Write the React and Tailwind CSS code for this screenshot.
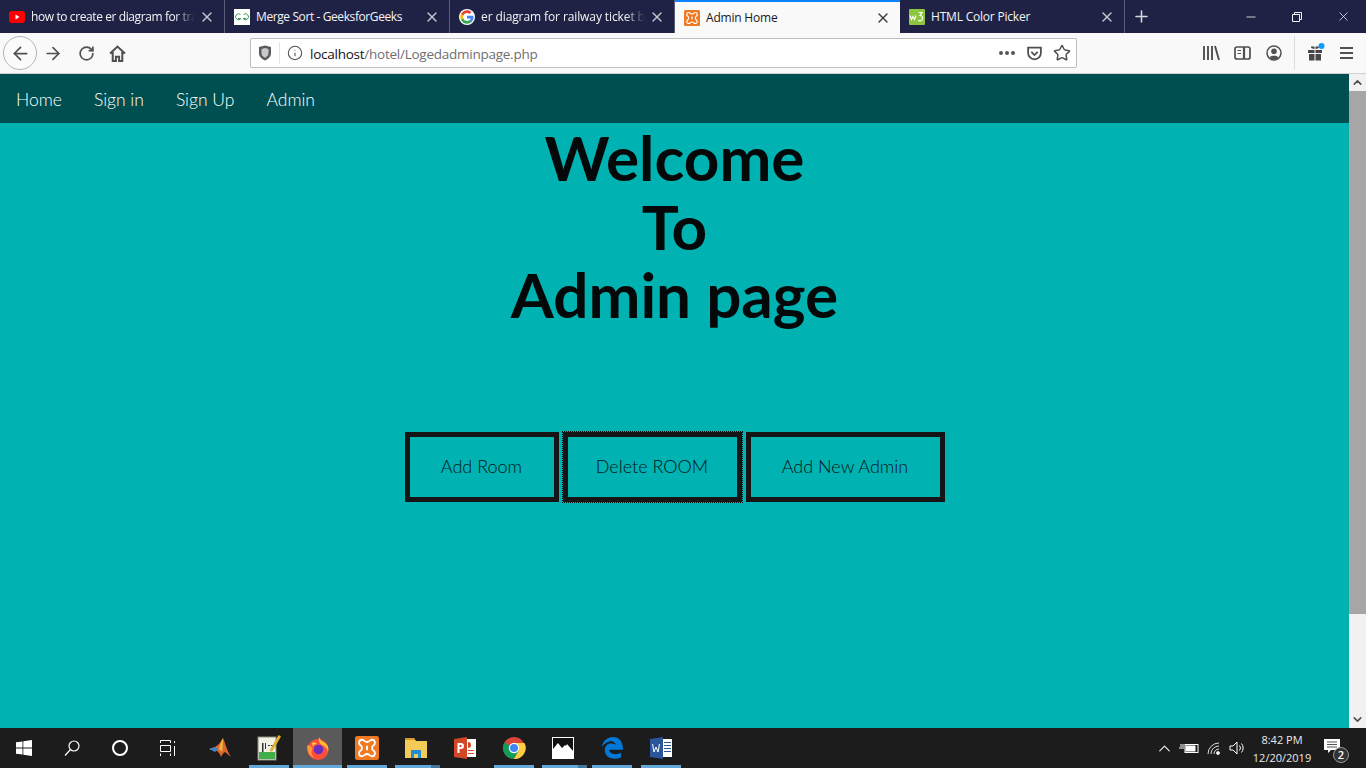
import { ArrowLeft, ArrowRight, RotateCw, Info, Star, X, Plus, Minus, ChevronUp, ChevronDown } from "lucide-react";

const uiFont = "font-['Open_Sans','Liberation_Sans',sans-serif]";
const pageFont = "font-['Lato','Liberation_Sans',sans-serif]";

function YouTube() {
  return (
    <svg width="16" height="16" viewBox="0 0 16 16">
      <rect x="0" y="2" width="16" height="12" rx="3" fill="#f00" />
      <path d="M6.500 5.500v5l4-2.500z" fill="#fff" />
    </svg>
  );
}

function Gfg() {
  return (
    <svg width="16" height="16" viewBox="0 0 16 16">
      <rect width="16" height="16" fill="#fff" />
      <path d="M6.500 5.500A3 3 0 1 0 7 9.500H4M9.500 5.500A3 3 0 1 1 9 9.500h3" stroke="#3f9a57" strokeWidth="1" fill="none" />
    </svg>
  );
}

function Google() {
  return (
    <svg width="16" height="16" viewBox="0 0 48 48">
      <circle cx="24" cy="24" r="24" fill="#fff" />
      <path fill="#EA4335" d="M24 12c3 0 5.600 1 7.700 3l5.700-5.700C33.900 6 29.400 4 24 4 16.200 4 9.500 8.500 6.200 15l6.600 5.100C14.400 15.300 18.800 12 24 12z" />
      <path fill="#4285F4" d="M43.500 24.500c0-1.400-.1-2.700-.4-4H24v7.900h11c-.5 2.500-1.900 4.700-4.100 6.100l6.400 5c3.800-3.500 6.200-8.700 6.200-15z" />
      <path fill="#FBBC05" d="M12.800 28.900c-.5-1.500-.8-3.100-.8-4.900s.3-3.400.8-4.900L6.200 14C4.800 16.900 4 20.300 4 24s.8 7.100 2.200 10z" />
      <path fill="#34A853" d="M24 44c5.400 0 9.900-1.800 13.300-4.900l-6.400-5c-1.800 1.200-4.100 1.900-6.900 1.900-5.200 0-9.600-3.500-11.200-8.100L6.200 33C9.500 39.500 16.200 44 24 44z" />
    </svg>
  );
}

function Xampp({ size = 16 }) {
  return (
    <svg width={size} height={size} viewBox="0 0 16 16">
      <rect width="16" height="16" rx="1.500" fill="#ee7a24" />
      <path d="M4.500 2.500c1.500 0 2 1.500 3.500 1.500s2-1.500 3.500-1.500c2 0 2.500 3 .5 4-.8.400-.8 2.600 0 3 2 1 1.500 4-.5 4-1.500 0-2-1.500-3.500-1.500s-2 1.500-3.500 1.500c-2 0-2.500-3-.5-4 .8-.4.800-2.600 0-3-2-1-1.500-4 .5-4z" fill="none" stroke="#fff" strokeWidth="1.200" />
      <path d="M8 6.500v3" stroke="#fff" strokeWidth="1.200" />
    </svg>
  );
}

function W3() {
  return (
    <svg width="16" height="16" viewBox="0 0 16 16">
      <rect width="16" height="16" rx="1" fill="#8cc63f" />
      <path d="M1 6.500l1.500 4 1.500-3 1.500 3 1.500-4M9.500 3.500H13l-2 3c1.500 0 2.500.8 2.500 2.300S12.500 12 11.200 12c-.8 0-1.400-.3-1.800-.9" fill="none" stroke="#fff" strokeWidth="1.200" />
    </svg>
  );
}

const tabs = [
  { title: "how to create er diagram for tra", icon: <YouTube />, faded: true, track: "tracking-[-0.4px]" },
  { title: "Merge Sort - GeeksforGeeks", icon: <Gfg />, track: "tracking-[-0.4px]" },
  { title: "er diagram for railway ticket bo", icon: <Google />, faded: true, track: "tracking-[-0.1px]" },
  { title: "Admin Home", icon: <Xampp />, active: true, track: "tracking-[-0.2px]" },
  { title: "HTML Color Picker", icon: <W3 />, track: "tracking-[-0.2px]" },
];

function TabStrip() {
  return (
    <div className={`flex h-[33px] bg-[#1f2244] text-xs ${uiFont}`}>
      {tabs.map((tab) => (
        <div
          key={tab.title}
          className={`flex w-[225px] items-center pl-[9px] pr-[9px] ${
            tab.active
              ? "border-t-2 border-[#0a84ff] bg-[#f9f9fa] text-[#18191a]"
              : "border-r border-[#5b5d76] text-[#f4f4f6]"
          }`}
        >
          <span className="w-[22px] shrink-0">{tab.icon}</span>
          <span
            className={`min-w-0 flex-1 overflow-hidden whitespace-nowrap pt-px ${tab.track} ${
              tab.faded ? "[mask-image:linear-gradient(to_right,#000_88%,transparent)]" : ""
            }`}
          >
            {tab.title}
          </span>
          <X size={16} className={tab.active ? "ml-1 text-[#3d3d40]" : "ml-1 text-[#c6c7d0]"} />
        </div>
      ))}
      <div className="flex w-[33px] items-center justify-center text-[#d5d6df]">
        <Plus size={19} />
      </div>
      <div className="flex flex-1 items-center justify-end text-[#f2f2f6]">
        <div className="flex w-[46px] justify-center"><Minus size={14} strokeWidth={1.4} /></div>
        <div className="flex w-[46px] justify-center">
          <svg width="10" height="10" viewBox="0 0 10 10" fill="none" stroke="currentColor">
            <path d="M2.500 2.500V.5h7v7h-2M.5 2.500h7v7h-7z" />
          </svg>
        </div>
        <div className="flex w-[46px] justify-center"><X size={15} strokeWidth={1.2} /></div>
      </div>
    </div>
  );
}

function Toolbar() {
  return (
    <div className={`flex h-[41px] items-center border-b border-[#d0d0d2] bg-[#f9f9fa] text-[#505053] ${uiFont}`}>
      <div className="flex w-[250px] items-center pl-[3px]">
        <div className="flex h-[34px] w-[34px] items-center justify-center rounded-full border border-[#b4b4b6] bg-[#fbfbfb]">
          <ArrowLeft size={21} strokeWidth={2} />
        </div>
        <div className="ml-[6px] flex w-[20px] justify-center"><ArrowRight size={21} strokeWidth={2} /></div>
        <div className="ml-[13px] flex w-[20px] justify-center"><RotateCw size={17} strokeWidth={2.4} /></div>
        <div className="ml-[11px] flex w-[20px] justify-center">
          <svg width="17" height="17" viewBox="0 0 16 16" fill="none" stroke="currentColor" strokeWidth="1.900">
            <path d="M1 8l7-6.500L15 8M3.500 6.500V15h3v-4h3v4h3V6.500" />
          </svg>
        </div>
      </div>
      <div className="flex h-[30px] w-[827px] items-center rounded-[2px] border border-[#bebebe] bg-white text-[13.5px]">
        <div className="flex w-[28px] justify-center">
          <svg width="14" height="16" viewBox="0 0 14 16">
            <path d="M1 2l6-1.500L13 2v6c0 4-3 6-6 7.500C4 14 1 12 1 8z" fill="#5a5a5d" />
            <path d="M3.500 4L7 3l3.500 1v4c0 2.500-1.700 3.700-3.500 4.800C5.200 11.700 3.500 10.500 3.500 8z" fill="#c9c9cb" />
          </svg>
        </div>
        <div className="h-[22px] w-px bg-[#e4e4e6]" />
        <div className="flex w-[30px] justify-center"><Info size={16} strokeWidth={1.6} /></div>
        <div className="flex-1 whitespace-nowrap pt-[2px] tracking-[-0.25px]">
          <span className="text-[#111]">localhost</span>
          <span className="text-[#6f6f72]">/hotel/Logedadminpage.php</span>
        </div>
        <div className="mr-[11px] flex gap-[2px]">
          <span className="h-[4px] w-[4px] rounded-full bg-[#555558]" />
          <span className="h-[4px] w-[4px] rounded-full bg-[#555558]" />
          <span className="h-[4px] w-[4px] rounded-full bg-[#555558]" />
        </div>
        <svg width="17" height="17" viewBox="0 0 16 16" fill="none" stroke="currentColor" strokeWidth="1.700">
          <path d="M2 2.500h12v5a6 6 0 0 1-12 0zM5 6.500l3 3 3-3" />
        </svg>
        <Star size={18} strokeWidth={2} className="ml-[10px] mr-[5px]" />
      </div>
      <div className="flex flex-1 items-center">
        <svg width="18" height="16" viewBox="0 0 18 16" fill="none" stroke="currentColor" strokeWidth="1.900" className="ml-[125px]">
          <path d="M2 1v14M6 1v14M10 1v14M13 1l4 14" />
        </svg>
        <svg width="17" height="16" viewBox="0 0 17 16" fill="none" stroke="currentColor" strokeWidth="1.700" className="ml-[14px]">
          <rect x="1" y="2" width="15" height="12" rx="2" />
          <path d="M10 2v12" strokeWidth="2.200" />
          <path d="M3.500 5.500h3.500M3.500 8.500h3.500" strokeWidth="1.200" />
        </svg>
        <svg width="16" height="16" viewBox="0 0 16 16" className="ml-[15px]">
          <circle cx="8" cy="8" r="7" fill="none" stroke="currentColor" strokeWidth="1.500" />
          <circle cx="8" cy="6.200" r="2.800" fill="currentColor" />
          <path d="M3.500 12.500c1-2.400 8-2.400 9 0a6 6 0 0 1-9 0z" fill="currentColor" />
        </svg>
        <div className="ml-[12px] h-[34px] w-px bg-[#dedee0]" />
        <svg width="18" height="20" viewBox="0 0 18 20" className="ml-[12px]">
          <path d="M1 7h6.500v3H1zM8.500 7H15v3H8.500zM2 11h5.500v6.500H2zM8.500 11H14v6.500H8.500zM4 3.500h3.500V6C5.500 6 3.500 5 4 3.500zM8.500 3.500H12C12.500 5 10.500 6 8.500 6z" fill="#47474a" />
          <circle cx="14.500" cy="3" r="3" fill="#0a9dff" />
        </svg>
        <div className="ml-[15px] flex w-[13px] flex-col gap-[3px]">
          <span className="h-[2px] bg-[#505053]" />
          <span className="h-[2px] bg-[#505053]" />
          <span className="h-[2px] bg-[#505053]" />
        </div>
      </div>
    </div>
  );
}

function PageButton({ children, className }) {
  return (
    <button className={`h-[70px] border-[5px] border-[#151515] pb-[2px] text-lg font-light text-[#001516] ${className}`}>
      {children}
    </button>
  );
}

function Scrollbar() {
  return (
    <div className="flex w-[17px] shrink-0 flex-col bg-[#f1f1f1] text-[#505050]">
      <div className="flex h-[17px] items-center justify-center"><ChevronUp size={13} strokeWidth={3} /></div>
      <div className="h-[523px] bg-[#a6a6a6]" />
      <div className="flex-1" />
      <div className="flex h-[17px] items-center justify-center"><ChevronDown size={13} strokeWidth={3} /></div>
    </div>
  );
}

function Page() {
  return (
    <div className={`flex min-h-0 flex-1 ${pageFont}`}>
      <div className="flex flex-1 flex-col bg-[#00b2b2]">
        <nav className="flex h-[49px] items-center gap-[32px] bg-[#004f50] pl-4 pt-[4px] text-[17.5px] font-light text-white">
          <a>Home</a>
          <a>Sign in</a>
          <a>Sign Up</a>
          <a>Admin</a>
        </nav>
        <h1 className="text-center text-[62px] font-bold leading-[68.500px] text-[#050808]">
          Welcome
          <br />
          To
          <br />
          Admin page
        </h1>
        <div className="mt-[103px] flex justify-center gap-[4px]">
          <PageButton className="w-[154px]">Add Room</PageButton>
          <PageButton className="w-[179px] outline-1 outline-dotted outline-offset-0 outline-[#111]">Delete ROOM</PageButton>
          <PageButton className="w-[199px]">Add New Admin</PageButton>
        </div>
      </div>
      <Scrollbar />
    </div>
  );
}

const taskIcons = [
  { key: "matlab", icon: (
    <svg width="24" height="24" viewBox="0 0 24 24">
      <path d="M1 13l6-2 4-3 4-6c2 4 4 13 8 19-3-2-4-4-6-5-2 1-3 3-4 5-1-3-3-6-6-7z" fill="#d9662c" />
      <path d="M1 13l6-2 3 2-3 3z" fill="#3d85c6" />
      <path d="M15 2c-2 4-4 9-4 11l3 3c1-4 1-10 1-14z" fill="#f0b03f" />
    </svg>
  ) },
  { key: "notepad", line: "single", icon: (
    <svg width="24" height="26" viewBox="0 0 24 26">
      <rect x="1" y="2" width="18" height="23" fill="#f0f2e4" stroke="#8a8a80" />
      <rect x="2" y="17" width="16" height="7" fill="#42b04a" />
      <path d="M5 8h1.500v9H5zM8 8h1v6H8zM11 10h2v1h-2zM14 10h2v1h-2z" fill="#333" />
      <path d="M21.500 0L24 1.500 15 17l-2.500-1.500z" fill="#e0b12f" />
    </svg>
  ) },
  { key: "firefox", line: "single", active: true, icon: (
    <svg width="24" height="24" viewBox="0 0 24 24">
      <circle cx="12" cy="13.500" r="10.500" fill="#ff4f3a" />
      <path d="M13 1c1 3 3 4 6 6 3 2 4 5 3 9-1-4-3-6-6-7-2-1-4-4-3-8z" fill="#ffbd2f" />
      <path d="M1.500 9c-1 5 1 11 7 13-3-3-4-6-2-9 0-2-2-3-5-4z" fill="#ff9a2e" />
      <path d="M6 7c2-1 4 0 5 1-2 0-4 1-4 3z" fill="#ffcf4a" />
      <circle cx="12.500" cy="13.500" r="4.800" fill="#6a2fc0" />
    </svg>
  ) },
  { key: "xampp", line: "single", icon: <Xampp size={24} /> },
  { key: "explorer", line: "stack", icon: (
    <svg width="24" height="24" viewBox="0 0 24 24">
      <path d="M1 2h9l2 3h11v17H1z" fill="#f4cb57" />
      <path d="M1 2h9l1 2H1z" fill="#d99b25" />
      <path d="M7 22v-8h10v8h-3v-4h-4v4z" fill="#1f8dd6" />
    </svg>
  ) },
  { key: "ppt", icon: (
    <svg width="24" height="24" viewBox="0 0 24 24">
      <rect x="11" y="3" width="12" height="18" fill="#fff" />
      <path d="M15 6a3 3 0 1 1 0 6zM15 14h6v1h-6zM15 17h6v1h-6z" fill="#d24726" />
      <path d="M1 3l13-2v22L1 21z" fill="#d24726" />
      <path d="M4.500 7h3.500a2.500 2.500 0 0 1 0 6H6.500v4h-2zM6.500 9v2h1.300a1 1 0 0 0 0-2z" fill="#fff" />
    </svg>
  ) },
  { key: "chrome", line: "single", icon: (
    <svg width="24" height="24" viewBox="0 0 24 24">
      <circle cx="12" cy="12" r="11" fill="#db4437" />
      <path d="M12 12L2.500 6.500A11 11 0 0 0 12 23l5-9z" fill="#0f9d58" />
      <path d="M12 7h10.500A11 11 0 0 1 12 23l5-9z" fill="#ffcd40" />
      <circle cx="12" cy="12" r="5.200" fill="#fff" />
      <circle cx="12" cy="12" r="4" fill="#4285f4" />
    </svg>
  ) },
  { key: "photos", line: "stack", icon: (
    <svg width="22" height="22" viewBox="0 0 22 22">
      <rect x=".5" y=".5" width="21" height="21" fill="#111" stroke="#fff" />
      <path d="M1 21v-9l5-6 4 5 3-3 1 1 1-2 6 7v7z" fill="#fff" />
    </svg>
  ) },
  { key: "edge", line: "single", icon: (
    <svg width="22" height="22" viewBox="0 0 24 24">
      <path d="M1 11C2 4 7 0 13 0c7 0 11 5 11 14H9c0 5 8 6 13 3v5c-8 4-18 1-18-8 0-3 2-6 5-7 2 0 7 0 7 2 0-3-4-5-7-4-3 1-6 3-8 6z" fill="#0078d7" />
    </svg>
  ) },
  { key: "word", line: "single", icon: (
    <svg width="24" height="24" viewBox="0 0 24 24">
      <rect x="11" y="3" width="12" height="18" fill="#fff" />
      <path d="M15 6h7v1h-7zM15 9h7v1h-7zM15 12h7v1h-7zM15 15h7v1h-7z" fill="#2b579a" />
      <path d="M1 3l13-2v22L1 21z" fill="#2b579a" />
      <path d="M3.500 8l1.500 8 2-5 2 5 1.500-8" fill="none" stroke="#fff" strokeWidth="1" />
    </svg>
  ) },
];

function TaskSlot({ item }) {
  return (
    <div className={`flex w-[49px] flex-col ${item.active ? "bg-[#5a5a5a]" : ""}`}>
      <div className="flex flex-1 items-center justify-center pt-[3px]">{item.icon}</div>
      {item.line === "single" && (
        <div className={`h-[3px] bg-[#64a8d8] ${item.active ? "" : "mx-auto w-[40px]"}`} />
      )}
      {item.line === "stack" && (
        <div className="ml-[4px] flex h-[3px] w-[45px]">
          <div className="flex-1 bg-[#64a8d8]" />
          <div className="w-[9px] bg-[#41789c]" />
        </div>
      )}
      {!item.line && <div className="h-[3px]" />}
    </div>
  );
}

function Taskbar() {
  return (
    <div className={`flex h-10 items-stretch bg-[#1c1c1c] text-[#eaeaea] ${uiFont}`}>
      <div className="flex w-[48px] items-center justify-center">
        <svg width="16" height="16" viewBox="0 0 16 16" fill="#fff">
          <path d="M0 2.300l6.500-.9v6.200H0zM7.300 1.300L16 0v7.600H7.300zM0 8.400h6.500v6.200L0 13.700zM7.300 8.400H16V16l-8.700-1.200z" />
        </svg>
      </div>
      <div className="flex w-[48px] items-center justify-center">
        <svg width="16" height="16" viewBox="0 0 16 16" fill="none" stroke="#fff" strokeWidth="1.200">
          <circle cx="10" cy="6" r="5" />
          <path d="M6.500 9.500L1 15.500" />
        </svg>
      </div>
      <div className="flex w-[48px] items-center justify-center">
        <div className="h-4 w-4 rounded-full border-2 border-white" />
      </div>
      <div className="mr-[3px] flex w-[48px] items-center justify-center">
        <svg width="16" height="16" viewBox="0 0 16 16" fill="none" stroke="#fff">
          <path d="M.5 3V.5h10V3M.5 13.500V16M10.500 13.500V16M.5 5.500h10v6H.5zM14.500 1v2M14.500 6v10" />
        </svg>
      </div>
      {taskIcons.map((item) => (
        <TaskSlot key={item.key} item={item} />
      ))}
      <div className="flex flex-1 items-center justify-end">
        <ChevronUp size={19} strokeWidth={1.500} className="mr-[5px]" />
        <svg width="20" height="14" viewBox="0 0 20 14" fill="none" stroke="#fff" className="mr-[8px]">
          <rect x="6" y="3.500" width="13" height="8" />
          <rect x="7" y="5" width="9" height="5" fill="#fff" />
          <path d="M0 7h5M2 3v3M4 3v3" />
        </svg>
        <svg width="16" height="14" viewBox="0 0 16 14" fill="none" stroke="#ddd" className="mr-[6px]">
          <path d="M1 13a11 11 0 0 1 11-11M4 13a8 8 0 0 1 8-8M7 13a5 5 0 0 1 5-5" />
          <circle cx="11" cy="12" r="1.500" fill="#fff" />
        </svg>
        <svg width="16" height="14" viewBox="0 0 16 14" fill="none" stroke="#fff" className="mr-[6px]">
          <path d="M1 5h3l4-4v12L4 9H1zM10.500 4.500a4 4 0 0 1 0 5M12.500 2.500a7 7 0 0 1 0 9" />
        </svg>
        <div className="flex w-[62px] flex-col items-center pt-[2px] text-[11px] leading-[18px]">
          <span>8:42 PM</span>
          <span>12/20/2019</span>
        </div>
        <div className="relative ml-[10px] mr-[19px] h-6 w-[24px]">
          <svg width="17" height="15" viewBox="0 0 17 15" className="mt-[3px] ml-[1px]">
            <path d="M0 0h16v11H7l-3 3v-3H0z" fill="#fff" />
            <path d="M3 3h10M3 5.500h10M3 8h10" stroke="#555" />
          </svg>
          <span className="absolute -bottom-[3px] right-[-2px] flex h-4 w-4 items-center justify-center rounded-full border border-[#999] bg-[#333] text-[11px] font-semibold text-white">
            2
          </span>
        </div>
      </div>
    </div>
  );
}

export default function App() {
  return (
    <div className="flex h-screen w-full flex-col overflow-hidden">
      <TabStrip />
      <Toolbar />
      <Page />
      <Taskbar />
    </div>
  );
}
